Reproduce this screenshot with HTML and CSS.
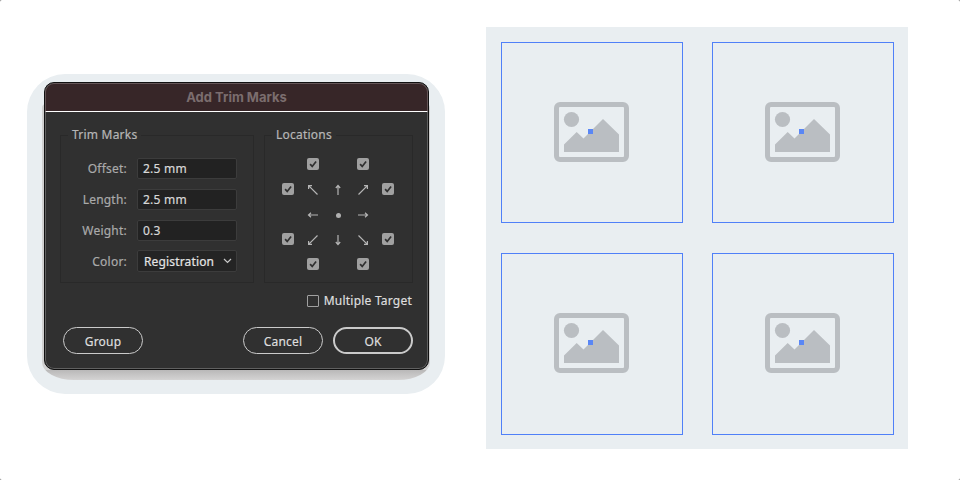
FILE: index.html
```html
<!DOCTYPE html>
<html lang="en">
<head>
<meta charset="utf-8">
<title>Add Trim Marks</title>
<link rel="stylesheet" href="styles.css">
</head>
<body>
<svg class="defs" width="0" height="0">
  <symbol id="picture" viewBox="0 0 75 60">
    <rect x="2.5" y="2.5" width="70" height="55" rx="3.5" fill="none" stroke="#babec2" stroke-width="5"/>
    <circle cx="17.5" cy="17.5" r="7.6"/>
    <path d="M10 50V42.500L22.700 30L29.500 36.500L49 17L65 32.500V50Z"/>
  </symbol>
  <symbol id="check" viewBox="0 0 12 12"><path d="M3.100 6.200L5.200 8.400L9.100 3.400" fill="none" stroke="#303030" stroke-width="1.700"/></symbol>
  <symbol id="straight" viewBox="0 0 12 12"><path d="M6 11V1.500M3.800 4L6 1.500L8.200 4" fill="none" stroke="#b4b4b4" stroke-width="1.200"/></symbol>
  <symbol id="diagonal" viewBox="0 0 12 12"><path d="M10.500 10.500L1.600 1.600M1.600 5V1.600H5" fill="none" stroke="#b4b4b4" stroke-width="1.200"/></symbol>
</svg>
<main class="scene">
  <div class="halo">
    <section class="dialog">
      <header class="titlebar">Add Trim Marks</header>
      <div class="groups">
        <fieldset class="group marks">
          <legend>Trim Marks</legend>
          <div class="field"><span class="name">Offset:</span><span class="input">2.5 mm</span></div>
          <div class="field"><span class="name">Length:</span><span class="input">2.5 mm</span></div>
          <div class="field"><span class="name">Weight:</span><span class="input">0.3</span></div>
          <div class="field"><span class="name">Color:</span><span class="input select">Registration<svg width="9" height="6" viewBox="0 0 9 6"><path d="M1 1L4.500 4.500L8 1" fill="none" stroke="#c8c8c8" stroke-width="1.200"/></svg></span></div>
        </fieldset>
        <fieldset class="group locations">
          <legend>Locations</legend>
          <div class="pad">
            <i></i><b><svg><use href="#check"/></svg></b><i></i><b><svg><use href="#check"/></svg></b><i></i>
            <b><svg><use href="#check"/></svg></b><svg><use href="#diagonal"/></svg><svg><use href="#straight"/></svg><svg class="r90"><use href="#diagonal"/></svg><b><svg><use href="#check"/></svg></b>
            <i></i><svg class="r270"><use href="#straight"/></svg><span class="dot"></span><svg class="r90"><use href="#straight"/></svg><i></i>
            <b><svg><use href="#check"/></svg></b><svg class="r270"><use href="#diagonal"/></svg><svg class="r180"><use href="#straight"/></svg><svg class="r180"><use href="#diagonal"/></svg><b><svg><use href="#check"/></svg></b>
            <i></i><b><svg><use href="#check"/></svg></b><i></i><b><svg><use href="#check"/></svg></b><i></i>
          </div>
        </fieldset>
      </div>
      <div class="multiple"><span class="box"></span><span>Multiple Target</span></div>
      <footer class="actions">
        <button class="button">Group</button>
        <button class="button cancel">Cancel</button>
        <button class="button ok">OK</button>
      </footer>
    </section>
  </div>
  <div class="board">
    <div class="tile"><svg><use href="#picture"/></svg><span class="handle"></span></div>
    <div class="tile"><svg><use href="#picture"/></svg><span class="handle"></span></div>
    <div class="tile"><svg><use href="#picture"/></svg><span class="handle"></span></div>
    <div class="tile"><svg><use href="#picture"/></svg><span class="handle"></span></div>
  </div>
</main>
</body>
</html>
```
FILE: styles.css
```css
* { box-sizing: border-box; }
body { margin: 0; background: #808080; font: 12px/16px "Noto Sans", "Open Sans", sans-serif; }
.defs { position: absolute; }
.scene { display: flex; align-items: flex-start; width: 960px; height: 480px; padding: 27px 52px 0 27px; background: #fff; border-radius: 2px; overflow: hidden; }
.halo { position: relative; width: 418px; height: 320px; margin-top: 47px; padding: 8px 16px 0 17px; background: #e9eef1; border-radius: 38px; }
.halo::before { content: ""; position: absolute; left: 15px; right: 15px; top: 30px; bottom: 14px; border-radius: 4px 4px 32px 32px / 4px 4px 18px 18px; background: linear-gradient(to bottom, #d0d0d0 calc(100% - 10px), #b9b8b8 calc(100% - 10px), #d4d3d3 100%); }
.dialog { position: relative; width: 385px; height: 288px; border: 1px solid #111; border-radius: 10px; background: #303030; color: #d2d2d2; overflow: hidden; box-shadow: inset 0 0 0 1px #606060; letter-spacing: .22px; -webkit-text-stroke: .2px currentColor; }
.titlebar { height: 29px; text-align: center; background: #372628; border: 1px solid #655658; border-bottom: 1px solid #fff; border-radius: 9px 9px 0 0; color: #7b6d6e; font: bold 13px/26px Inter, sans-serif; letter-spacing: 0; -webkit-text-stroke: 0; }
.groups { display: flex; gap: 10px; margin: 15px 15px 0; }
.group { min-width: 0; margin: 0; padding: 0; border: 1px solid #292929; height: 156px; }
.marks { width: 194px; }
.locations { width: 149px; }
legend { margin-left: 7px; padding: 0 4px; color: #b6b6b6; }
.field { display: flex; align-items: center; height: 22px; margin: 0 0 9px; }
.marks .field:nth-of-type(1) { margin-top: 14px; }
.name { width: 66px; padding-top: 1px; text-align: right; color: #aaa; }
.input { display: flex; align-items: center; justify-content: space-between; width: 100px; height: 21px; margin-left: 10px; padding: 2px 5px 0; border: 1px solid #3c3c3c; border-radius: 2px; background: #222; color: #d8d8d8; }
.select { height: 22px; padding-left: 6px; padding-right: 4px; color: #e4e4e4; background: #242424; letter-spacing: .15px; }
.select svg { margin-top: -3px; }
.pad { display: grid; grid-template-columns: repeat(5, 25px); grid-auto-rows: 25px; place-items: center; margin: 8px 0 0 10px; }
.pad > svg { width: 12px; height: 12px; margin: 3px 0 0 1px; }
.pad b { width: 12px; height: 12px; border-radius: 2px; background: #a0a0a0; }
.pad b svg { display: block; width: 12px; height: 12px; }
.r90 { transform: rotate(90deg); }
.r180 { transform: rotate(180deg); }
.r270 { transform: rotate(270deg); }
.dot { width: 5px; height: 5px; margin: 3px 0 0 2px; border-radius: 50%; background: #b0b0b0; }
.multiple { display: flex; justify-content: flex-end; align-items: center; gap: 5px; height: 16px; margin: 10px 16px 0; color: #dedede; }
.box { width: 12px; height: 12px; border: 1px solid #a0a0a0; border-radius: 1px; }
.actions { display: flex; margin: 18px 15px 0 18px; }
.button { width: 80px; height: 27px; padding: 2px 0 0; border: 1px solid #cacaca; border-radius: 14px; background: none; color: #dedede; font: inherit; letter-spacing: inherit; }
.cancel { margin-left: auto; margin-right: 10px; }
.ok { border-width: 2px; }
.board { display: grid; grid-template-columns: 182px 182px; grid-template-rows: 181px 182px; gap: 30px 29px; width: 422px; height: 422px; margin-left: 41px; padding: 15px; background: #e9eef1; }
.tile { display: grid; place-items: start; border: 1px solid #5080f8; }
.tile > * { grid-area: 1 / 1; }
.tile svg { width: 75px; height: 60px; margin: 59px 0 0 52px; fill: #babec2; }
.handle { width: 5px; height: 5px; margin: 86px 0 0 86px; background: #5a87f5; }
```
